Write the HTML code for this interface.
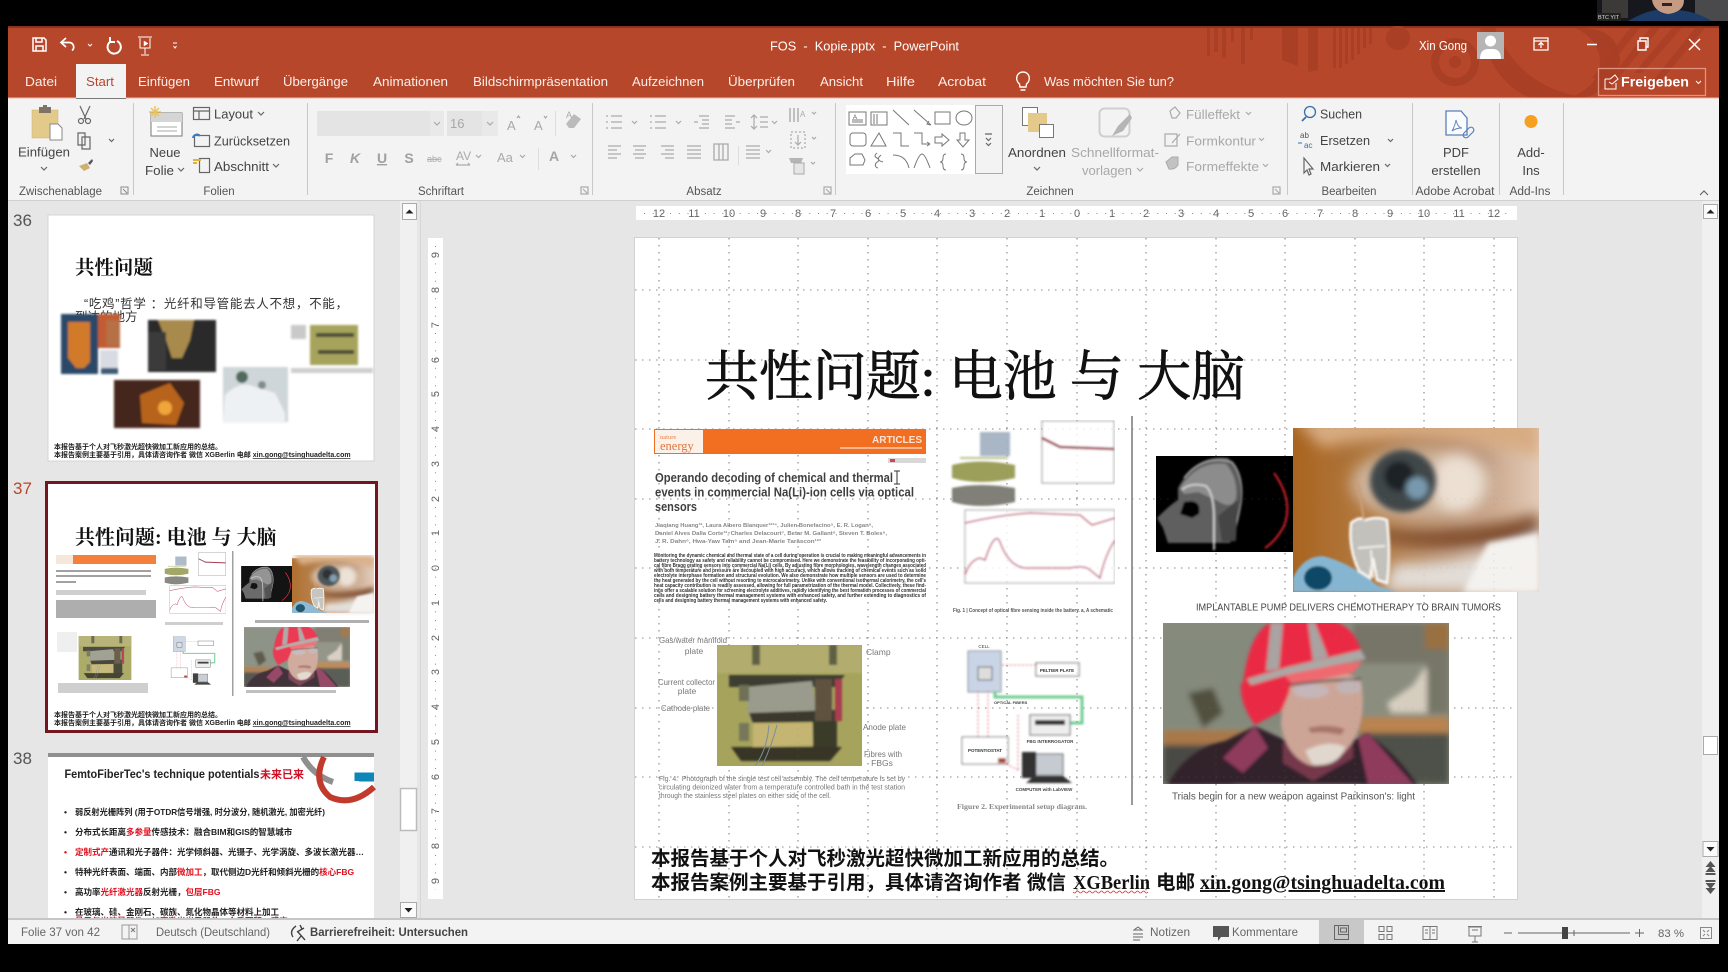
<!DOCTYPE html>
<html lang="de"><head><meta charset="utf-8"><title>FOS - Kopie.pptx - PowerPoint</title>
<style>
html,body{margin:0;padding:0;background:#000;width:1728px;height:972px;overflow:hidden}
svg{display:block;filter:blur(.35px)}
text{font-family:"Liberation Sans","Noto Sans CJK SC",sans-serif;white-space:pre}
.w{fill:#fff;font-size:13px}
.tab{fill:#fbeee9;font-size:13px}
.r{fill:#444;font-size:13px}
.d{fill:#a8a8a8;font-size:13px}
.l{fill:#555;font-size:11.5px;text-anchor:middle}
.m{text-anchor:middle}
.s{fill:#666;font-size:12px}
.rn{fill:#666;font-size:11px;text-anchor:middle}
.ser{font-family:"Liberation Serif","Noto Serif CJK SC",serif}
.ic{fill:none;stroke:#666;stroke-width:1.2}
.dc{fill:none;stroke:#aaa;stroke-width:1.2}
.sh{fill:none;stroke:#777;stroke-width:1}
</style></head><body>
<svg xmlns="http://www.w3.org/2000/svg" width="1728" height="972" viewBox="0 0 1728 972">
<defs>
<filter id="b1" x="-20%" y="-20%" width="140%" height="140%"><feGaussianBlur stdDeviation="1"/></filter>
<filter id="b2" x="-20%" y="-20%" width="140%" height="140%"><feGaussianBlur stdDeviation="1.6"/></filter>
<filter id="b3" x="-30%" y="-30%" width="160%" height="160%"><feGaussianBlur stdDeviation="3"/></filter>
<filter id="b7" x="-40%" y="-40%" width="180%" height="180%"><feGaussianBlur stdDeviation="7"/></filter>
<linearGradient id="eyeg" x1="0" x2="1" y1="0" y2="0"><stop offset="0" stop-color="#a9641f"/><stop offset=".3" stop-color="#b27a42"/><stop offset=".65" stop-color="#b98d6c"/><stop offset="1" stop-color="#e3cbb8"/></linearGradient>

<symbol id="eye" viewBox="0 0 246 164" overflow="hidden">
<rect width="246" height="164" fill="url(#eyeg)"/>
<g filter="url(#b7)">
<path d="M30 20C70 5 190 5 246 30L246 -10L0 -10Z" fill="#d8ac82"/>
<path d="M40 35Q120 -5 210 40L190 28Q120 8 50 28Z" fill="#70502f"/>
<ellipse cx="130" cy="56" rx="72" ry="36" fill="#cdb29a"/>
<ellipse cx="165" cy="55" rx="26" ry="30" fill="#ece0d3"/>
<path d="M70 100Q150 112 246 85L246 112Q150 126 90 112Z" fill="#7e4c2c"/>
<path d="M100 135Q190 135 246 105L246 164L90 164Z" fill="#e2ddd7"/>
</g>
<g filter="url(#b3)">
<ellipse cx="110" cy="53" rx="33" ry="31" fill="#3f474a"/>
<circle cx="106" cy="48" r="15" fill="#1f2427"/>
<ellipse cx="124" cy="60" rx="11" ry="11" fill="#7899ad"/>
<path d="M195 115L246 105L246 164L170 164Z" fill="#f4f2ef"/>
</g>
<g filter="url(#b1)">
<path d="M0 150Q10 128 30 128Q58 135 85 158L105 164L0 164Z" fill="#86b5d2"/>
<ellipse cx="25" cy="150" rx="14" ry="12" fill="#0f4a66"/>
<path d="M58 95Q66 88 72 92Q84 88 94 92Q98 125 94 155L84 152L80 130L77 150L66 143Q55 120 58 95Z" fill="#c2c1bb" stroke="#fbf8f3" stroke-width="2.500"/>
<path d="M65 120L92 118M78 122L80 150" stroke="#f1efeb" stroke-width="2"/>
<path d="M65 55L71 92" stroke="#c99d74" stroke-width="2.500"/>
</g>
</symbol>

<symbol id="person" viewBox="0 0 286 161" overflow="hidden">
<rect width="286" height="161" fill="#8b8e7f"/>
<g filter="url(#b3)">
<rect x="0" y="0" width="120" height="105" fill="#848a7c"/>
<rect x="190" y="0" width="96" height="40" fill="#777568"/>
<rect x="262" y="0" width="24" height="26" fill="#99703f"/>
<rect x="0" y="107" width="90" height="15" fill="#a8784a"/>
<rect x="195" y="94" width="91" height="16" fill="#ba8350"/>
<rect x="197" y="110" width="89" height="51" fill="#4e5148"/>
<rect x="0" y="122" width="70" height="39" fill="#4a4a44"/>
<path d="M224 80L250 62L262 44L280 76L270 90L228 90Z" fill="#d6cdbf"/>
<path d="M25 70L50 65L60 90L40 105Z" fill="#51503e"/>
<rect x="264" y="30" width="22" height="60" fill="#777768"/>
</g>
<g filter="url(#b2)">
<path d="M5 161Q25 125 62 118L92 103L150 130L205 112Q228 125 254 161Z" fill="#33202c"/>
<path d="M60 135L92 103L105 125L80 150ZM195 115L205 110L250 161L205 161Z" fill="#8e3a5c"/>
<path d="M120 118Q150 145 190 115L190 135L150 158L120 140Z" fill="#75394c"/>
<path d="M122 55Q170 38 198 58Q204 95 190 118Q172 146 146 142Q122 132 118 100Z" fill="#cda596"/>
<path d="M142 128Q165 116 182 124Q176 144 150 142Z" fill="#e0d8ce"/>
<path d="M145 105Q165 100 182 106L178 112Q160 108 148 110Z" fill="#a87468"/>
<path d="M80 60Q88 -5 120 -2L170 -2Q195 5 200 36L135 52Q127 60 126 70Q118 90 118 88L92 102Q76 80 78 60Z" fill="#ea2a45"/>
<path d="M120 50L200 38L190 50L130 62Z" fill="#ee6a70"/>
<path d="M84 56L125 44L198 27L203 36L130 50L88 62Z" fill="#aaa9a6"/>
<path d="M108 0L103 48L116 46L120 0ZM145 0L150 38L165 34L152 0Z" fill="#a9a3a2"/>
<path d="M126 62L160 58L198 56" stroke="#4a4a4a" stroke-width="2" fill="none"/>
<ellipse cx="148" cy="68" rx="18" ry="7" fill="#c3b9bf" opacity=".85"/>
<ellipse cx="186" cy="64" rx="13" ry="7" fill="#bfb5ba" opacity=".85"/>
</g>
</symbol>

<symbol id="mri" viewBox="0 0 138 96" overflow="hidden">
<rect width="138" height="96" fill="#000"/>
<g filter="url(#b1)">
<path d="M1 62Q15 48 22 44L22 32Q40 -2 72 2Q86 15 84 40Q82 65 74 87L12 87L7 72Z" fill="#5e5e5e"/>
<path d="M24 32Q42 4 70 8Q82 22 80 42Q76 55 60 44L42 36L28 38Z" fill="#8c8c8c"/>
<path d="M28 22Q46 -2 76 6Q88 20 85 46Q82 65 76 85" stroke="#a8a8a8" stroke-width="1.500" fill="none"/>
<path d="M26 34Q34 26 50 30Q58 38 58 62L58 94" stroke="#cdcdcd" stroke-width="2" fill="none"/>
<path d="M28 46Q46 42 43 58L36 62L24 58Z" fill="#000"/>
<path d="M62 60L82 44L80 85L66 86Z" fill="#444"/>
<path d="M118 17Q138 45 128 70Q120 85 109 92" stroke="#d6202a" stroke-width="2" fill="none"/>
</g>
</symbol>

<symbol id="clamp" viewBox="0 0 145 121" overflow="hidden">
<rect width="145" height="121" fill="#a6a45c"/>
<g filter="url(#b1)">
<rect x="0" y="0" width="145" height="28" fill="#b2ad6e"/>
<rect x="35" y="0" width="8" height="20" fill="#5f5e45"/>
<rect x="112" y="0" width="8" height="20" fill="#5f5e45"/>
<path d="M12 30L128 30L118 42L12 42Z" fill="#3e3c33"/>
<path d="M28 42L95 36L100 70L32 72Z" fill="#9a9b8c"/>
<path d="M32 68L118 65L125 76L36 78Z" fill="#3b392d"/>
<rect x="98" y="34" width="17" height="50" fill="#5e5340"/>
<rect x="118" y="34" width="7" height="42" fill="#a83e50"/>
<path d="M36 78L95 78L96 100L36 102Z" fill="#c4b572"/>
<rect x="96" y="76" width="24" height="30" fill="#3b3a2a"/>
<path d="M14 102L125 102L113 116L24 116Z" fill="#373428"/>
<rect x="22" y="40" width="10" height="16" fill="#6f6f55"/>
<rect x="22" y="78" width="10" height="18" fill="#77775a"/>
</g>
<path d="M52 80Q50 105 38 121M60 80Q55 100 45 121" stroke="#7a8ea0" stroke-width="1" fill="none"/>
</symbol>

<symbol id="figa" viewBox="0 0 165 165" overflow="hidden">
<g filter="url(#b1)">
<rect x="30" y="12" width="30" height="24" fill="#a8b6c6"/>
<path d="M10 38L58 38" stroke="#b9c38a" stroke-width="2"/>
<path d="M2 45Q30 38 65 45L65 58Q30 66 2 58Z" fill="#9b9f5a"/>
<path d="M2 68Q30 62 65 68L65 82Q30 90 2 82Z" fill="#808078"/>
<rect x="92" y="1" width="72" height="62" fill="#fff" stroke="#888" stroke-width="1"/>
<path d="M92 18L100 22L110 27L164 29" stroke="#9a2f40" stroke-width="2.500" fill="none"/>
<rect x="15" y="90" width="150" height="73" fill="#fff" stroke="#999" stroke-width="1"/>
<path d="M15 103Q50 95 80 93L130 95L142 105L165 98M15 155Q20 140 30 138L35 140Q45 110 50 122Q60 150 80 148L120 148Q135 145 140 150L150 158Q155 135 165 120" stroke="#c25a78" stroke-width="1.500" fill="none"/>
</g>
</symbol>

<symbol id="figb" viewBox="0 0 130 165" overflow="hidden">
<g filter="url(#b1)" stroke-linejoin="miter">
<rect x="8" y="10" width="33" height="41" fill="#c9d5e6" stroke="#8a8f98"/>
<rect x="18" y="26" width="14" height="13" fill="#ddd" stroke="#444"/>
<path d="M35 50L35 56L122 56L122 82L110 82" stroke="#6fcd92" stroke-width="3" fill="none"/>
<path d="M18 50L18 96M28 50L28 96M42 24L76 24" stroke="#e06a78" stroke-width="1" stroke-dasharray="2 2" fill="none"/>
<rect x="76" y="22" width="43" height="13" fill="#fff" stroke="#444"/>
<rect x="70" y="74" width="40" height="20" fill="#eee" stroke="#444"/>
<rect x="75" y="79" width="30" height="5" fill="#333"/>
<rect x="2" y="96" width="46" height="27" fill="#fff" stroke="#666"/>
<rect x="38" y="117" width="8" height="5" fill="#a43"/>
<path d="M46 123L60 130M58 74L58 130" stroke="#e06a78" stroke-width="1" stroke-dasharray="2 2" fill="none"/>
<rect x="62" y="111" width="14" height="26" fill="#333"/>
<rect x="76" y="113" width="27" height="21" fill="#c6cbd2" stroke="#555"/>
<path d="M66 142L112 142L103 135L74 135Z" fill="#333"/>
</g>
</symbol>

<g id="grid" fill="none" stroke="#888" stroke-width="1.100" stroke-dasharray="1.500 5.500">
<path d="M659 238V899M729 238V899M798 238V899M868 238V899M937 238V899M1007 238V899M1077 238V899M1146 238V899M1216 238V899M1285 238V899M1355 238V899M1424 238V899M1494 238V899"/>
<path d="M635 290H1517M635 360H1517M635 429H1517M635 499H1517M635 568H1517M635 638H1517M635 708H1517M635 777H1517M635 847H1517"/>
</g>
</defs>

<rect width="1728" height="972" fill="#000"/>

<!-- webcam -->
<g>
<rect x="1597" y="0" width="131" height="21" fill="#16181d"/>
<path d="M1602 0h26v18h-26z" fill="#3b3a38"/>
<path d="M1695 0h33v21h-33z" fill="#4a4a4c"/>
<path d="M1628 21Q1650 8 1665 10Q1690 8 1712 21Z" fill="#1c3b66"/>
<path d="M1652 0H1684Q1684 12 1668 14Q1654 12 1652 0Z" fill="#c59b84"/>
<rect x="1662" y="3" width="10" height="3" fill="#33221d"/>
<rect x="1597" y="13" width="24" height="8" fill="#222"/>
<text x="1598" y="19" font-size="5.500" fill="#ddd">BTC YIT</text>
</g>

<!-- title bar -->
<rect x="8" y="26" width="1711" height="72" fill="#b7472a"/>
<rect x="8" y="26" width="1711" height="2" fill="#8a3520"/>
<g fill="#a93f25">
<path d="M1207 28h3v28h-3zM1214 28h4v24h-4zM1222 28h4v30h-4zM1231 28h3v14h-3zM1241 28h4v36h-4zM1250 28h3v12h-3z"/>
<path d="M1282 28h16v38l-16-6zM1308 28h10v42l-10 2zM1333 28h3v40h-3zM1339 28h3v40h-3zM1345 28h3v36h-3zM1351 28h3v32h-3zM1357 28h3v26h-3zM1363 28h3v20h-3zM1369 28h3v16h-3z"/>
<circle cx="1398" cy="38" r="12"/>
<circle cx="1455" cy="62" r="20" fill="none" stroke="#a93f25" stroke-width="8"/>
<circle cx="1455" cy="62" r="6"/>
<path d="M1495 28Q1520 90 1590 98H1530Q1490 80 1480 28Z"/>
<path d="M1580 28Q1620 28 1620 62Q1610 90 1585 98H1570Q1600 85 1600 62Q1600 40 1575 28Z"/>
<path d="M1630 28h10l-40 50h-8zM1650 28h10l-50 60h-8zM1672 28h10l-40 45h-8zM1695 28h10l-50 60h-8z" opacity=".8"/>
</g>

<!-- QAT icons -->
<g fill="none" stroke="#fff" stroke-width="1.500">
<path d="M33 38h11l2 2v11H33zM36 51v-5h7v5M36 38v4h6v-4"/>
<path d="M66 38l-5 4.500 5 4.500M62 42.500h7a4.500 4.500 0 0 1 3 8" stroke-width="1.700"/>
<path d="M88 44l2 2 2-2" stroke-width="1"/>
<path d="M117 41a6.600 6.600 0 1 1-6 .2M110 37v5h5" stroke-width="2"/>
<path d="M138 37h14M140 38v10h10v-10M145 48v6M141 55h8" stroke-width="1"/>
<path d="M144 41l4 2.500-4 2.500z" fill="#fff" stroke-width=".5"/>
<path d="M173 43h4M173.500 46l1.500 2 1.500-2" stroke-width="1"/>
</g>

<text x="770" y="50.500" class="w" textLength="189" lengthAdjust="spacingAndGlyphs">FOS  -  Kopie.pptx  -  PowerPoint</text>

<!-- tabs -->
<rect x="76" y="64" width="50" height="34" fill="#f3f3f3"/>
<rect x="8" y="97.500" width="68" height="1" fill="#f0b9a8"/><rect x="126" y="97.500" width="1593" height="1" fill="#f0b9a8"/>
<text x="25" y="86" class="tab" textLength="32" lengthAdjust="spacingAndGlyphs">Datei</text>
<text x="86" y="86" textLength="28" lengthAdjust="spacingAndGlyphs" font-size="13" fill="#b7472a">Start</text>
<text x="138" y="86" class="tab" textLength="52" lengthAdjust="spacingAndGlyphs">Einfügen</text>
<text x="214" y="86" class="tab" textLength="45" lengthAdjust="spacingAndGlyphs">Entwurf</text>
<text x="283" y="86" class="tab" textLength="65" lengthAdjust="spacingAndGlyphs">Übergänge</text>
<text x="373" y="86" class="tab" textLength="75" lengthAdjust="spacingAndGlyphs">Animationen</text>
<text x="473" y="86" class="tab" textLength="135" lengthAdjust="spacingAndGlyphs">Bildschirmpräsentation</text>
<text x="632" y="86" class="tab" textLength="72" lengthAdjust="spacingAndGlyphs">Aufzeichnen</text>
<text x="728" y="86" class="tab" textLength="67" lengthAdjust="spacingAndGlyphs">Überprüfen</text>
<text x="820" y="86" class="tab" textLength="43" lengthAdjust="spacingAndGlyphs">Ansicht</text>
<text x="886" y="86" class="tab" textLength="29" lengthAdjust="spacingAndGlyphs">Hilfe</text>
<text x="938" y="86" class="tab" textLength="48" lengthAdjust="spacingAndGlyphs">Acrobat</text>
<g fill="none" stroke="#fff" stroke-width="1.400"><path d="M1019.500 84c-5-4-3-12 3.500-12s8.500 8 3.500 12l-.5 3h-6zM1020.500 90h5"/></g>
<text x="1044" y="86" class="tab" textLength="130" lengthAdjust="spacingAndGlyphs">Was möchten Sie tun?</text>

<!-- account and window controls -->
<text x="1419" y="50" class="w" font-size="12" textLength="48" lengthAdjust="spacingAndGlyphs">Xin Gong</text>
<rect x="1477" y="32" width="27" height="27" fill="#b5b5b5"/>
<circle cx="1490.500" cy="41" r="5.500" fill="#fff"/><path d="M1480 59q0-9 7-10h7q7 1 7 10z" fill="#fff"/>
<g fill="none" stroke="#fff" stroke-width="1.300">
<path d="M1534 38h14v12h-14zM1534 41h14M1541 48v-5M1538.500 45l2.500-2.500 2.500 2.500"/>
<path d="M1587 44.500h10" stroke-width="1.500"/>
<path d="M1638 41h8v9h-8zM1640 41v-3h8v9h-2" stroke-width="1.400"/>
<path d="M1689 39l11 11M1700 39l-11 11" stroke-width="1.500"/>
</g>
<rect x="1598.500" y="68.500" width="107" height="27" fill="none" stroke="#e0937f" stroke-width="1.300"/>
<path d="M1605 79v10h11v-6M1605 79h5l5-4 3 4-6 5-3-2" fill="none" stroke="#fff" stroke-width="1"/>
<text x="1621" y="86.500" font-size="14" font-weight="700" fill="#fff" textLength="68" lengthAdjust="spacingAndGlyphs">Freigeben</text>
<path d="M1696 81l2.500 2.500 2.500-2.500" fill="none" stroke="#fff"/>

<!-- ribbon -->
<rect x="8" y="98.500" width="1711" height="102" fill="#f3f3f3"/>
<rect x="8" y="200" width="1711" height="1" fill="#cfcfcf"/>
<g stroke="#c8c8c8" stroke-width="1"><path d="M133.500 103V195M307.500 103V195M592.500 103V195M835.500 103V195M1287.500 103V195M1412.500 103V195M1499.500 103V195M1563.500 103V195"/></g>

<!-- clipboard group -->
<rect x="32" y="110" width="26" height="28" fill="#e3c98a" stroke="#cdb26f" stroke-width=".5"/>
<rect x="39" y="107" width="12" height="6" fill="#7d7368"/><rect x="43" y="105" width="4" height="3" fill="#7d7368"/>
<path d="M50 124h8l4 4v12H50z" fill="#fff" stroke="#888"/>
<text x="44" y="156.500" class="r m" textLength="52" lengthAdjust="spacingAndGlyphs">Einfügen</text>
<path d="M41 167l3 3 3-3" class="ic"/>
<path d="M80 106l6 13M90 106l-6 13" class="ic"/><circle cx="81" cy="121" r="2.500" class="ic"/><circle cx="88" cy="121" r="2.500" class="ic"/>
<path d="M78 133h7v12h-7zM82 137h8v12h-8z" class="ic" fill="#f3f3f3"/>
<path d="M109 139l2.500 2.500 2.500-2.500" class="ic"/>
<path d="M79 166l8-3 3 5-6 3z" fill="#cdb26f"/><path d="M88 163l4-4 1 2-3 4z" fill="#555"/>
<text x="19" y="195" font-size="11.500" fill="#555" textLength="83" lengthAdjust="spacingAndGlyphs">Zwischenablage</text>
<path d="M121 187h7v7h-7zM123 189l4 4" fill="none" stroke="#888"/>

<!-- slides group -->
<rect x="151" y="113" width="31" height="23" fill="#fff" stroke="#777"/><rect x="151" y="113" width="31" height="9" fill="#d5d5d5"/>
<path d="M157 127h20M157 131h20" stroke="#aaa"/>
<g stroke="#e9c45a" stroke-width="1.500"><path d="M155 106v12M149 112h12M151 108l8 8M159 108l-8 8"/></g>
<text x="165" y="157" class="r m" textLength="31" lengthAdjust="spacingAndGlyphs">Neue</text>
<text x="145" y="175" class="r" textLength="29" lengthAdjust="spacingAndGlyphs">Folie</text><path d="M178 168l3 3 3-3" class="ic"/>
<rect x="193.500" y="107.500" width="16" height="12" class="ic" fill="#fff"/><path d="M194 111h15M199 111v8" class="ic"/>
<text x="214" y="118.500" class="r" textLength="39" lengthAdjust="spacingAndGlyphs">Layout</text><path d="M258 112l3 3 3-3" class="ic"/>
<rect x="194.500" y="135.500" width="15" height="11" class="ic" fill="#fff"/><path d="M193 138a4 4 0 0 1 7-2" stroke="#3a7cc1" stroke-width="2" fill="none"/>
<text x="214" y="145.500" class="r" textLength="76" lengthAdjust="spacingAndGlyphs">Zurücksetzen</text>
<rect x="199.500" y="158.500" width="10" height="14" class="ic" fill="#fff"/><path d="M193 160h8M193 163h4" stroke="#e0b040" stroke-width="2"/>
<text x="214" y="171" class="r" textLength="55" lengthAdjust="spacingAndGlyphs">Abschnitt</text><path d="M273 164l3 3 3-3" class="ic"/>
<text x="219" y="195" class="l">Folien</text>

<!-- font group -->
<rect x="317" y="111" width="113" height="25" fill="#e4e4e4"/><rect x="430" y="111" width="14" height="25" fill="#e9e9e9"/>
<rect x="447" y="111" width="35" height="25" fill="#e4e4e4"/><rect x="482" y="111" width="16" height="25" fill="#e9e9e9"/>
<path d="M434 122l3 3 3-3M487 122l3 3 3-3" class="dc"/>
<text x="450" y="128" class="d" font-size="14">16</text>
<text x="507" y="130" class="d" font-size="14">A</text><text x="534" y="130" class="d" font-size="14">A</text>
<path d="M517 118l1.500-2 1.500 2M544 116l1.500 2 1.500-2" class="dc"/>
<path d="M555.500 111V136" stroke="#ddd"/>
<path d="M566 124l8-10 7 5-7 9h-5z" fill="#bbb"/><text x="566" y="118" font-size="9" fill="#aaa">A</text>
<g font-size="14" font-weight="700" fill="#a0a0a0" text-anchor="middle">
<text x="329" y="163">F</text><text x="355" y="163" font-style="italic">K</text><text x="382" y="163" text-decoration="underline">U</text><text x="409" y="163">S</text>
</g>
<text x="427" y="162" font-size="9" fill="#aaa" text-decoration="line-through">abc</text>
<text x="456" y="160" font-size="12" fill="#aaa">AV</text><path d="M456 165h14M456 165l2-2M470 165l-2-2" class="dc"/><path d="M476 155l2.500 2.500 2.500-2.500" class="dc"/>
<text x="497" y="162" font-size="13" fill="#aaa">Aa</text><path d="M520 155l2.500 2.500 2.500-2.500" class="dc"/>
<path d="M538.500 148V170" stroke="#ddd"/>
<text x="549" y="161" font-size="14" font-weight="700" fill="#a5a5a5">A</text><path d="M571 155l2.500 2.500 2.500-2.500" class="dc"/>
<text x="441" y="195" class="l">Schriftart</text>
<path d="M581 187h7v7h-7zM583 189l4 4" class="dc"/>

<!-- paragraph group -->
<g class="dc">
<path d="M611 116h11M611 122h11M611 128h11M606 116h2M606 122h2M606 128h2"/><path d="M632 121l2.500 2.500 2.500-2.500"/>
<path d="M655 116h11M655 122h11M655 128h11M650 116h2M650 122h2M650 128h2"/><path d="M676 121l2.500 2.500 2.500-2.500"/>
<path d="M699 116h10M702 120h7M702 124h7M699 128h10M698 122h-4"/>
<path d="M725 116h10M725 120h7M725 124h7M725 128h10M736 122h4"/>
<path d="M754 115v14M751 118l3-3 3 3M751 126l3 3 3-3M760 117h8M760 122h8M760 127h8"/><path d="M772 121l2.500 2.500 2.500-2.500"/>
<path d="M790 108v14M794 108v14M798 108v14" stroke-width="1.400"/><path d="M812 112l2 2 2-2"/>
<path d="M791 132h14v16h-14z" stroke-dasharray="2 2"/><path d="M798 135v10M795 142l3 3 3-3"/><path d="M812 137l2 2 2-2"/>
<path d="M811 162l2 2 2-2"/>
<path d="M608 146h13M608 150h9M608 154h13M608 158h9"/>
<path d="M633 146h13M635 150h9M633 154h13M635 158h9"/>
<path d="M661 146h13M665 150h9M661 154h13M665 158h9"/>
<path d="M687 146h14M687 150h14M687 154h14M687 158h14"/>
<path d="M714 144h14v16h-14zM719 144v16M723 144v16" stroke-width="1.300"/>
<path d="M746 146h14M746 150h14M746 154h14M746 158h14"/><path d="M766 150l2.500 2.500 2.500-2.500"/>
</g>
<text x="800" y="117" font-size="8" fill="#aaa">A</text>
<path d="M738.500 146V165" stroke="#ddd"/>
<path d="M789 158h14l-2 5h-10z" fill="#b5b5b5"/><path d="M794 163h10v11h-10z" fill="#e6e6e6" stroke="#aaa"/>
<text x="704" y="195" class="l">Absatz</text>
<path d="M824 187h7v7h-7zM826 189l4 4" class="dc"/>

<!-- shapes gallery -->
<rect x="846" y="105" width="129" height="69" fill="#fff"/>
<rect x="975.500" y="105.500" width="27" height="68" fill="#f3f3f3" stroke="#aaa"/>
<path d="M985 134h7M986 138l2.500 2.500 2.500-2.500" class="ic"/><path d="M986 143l2.500 2.500 2.500-2.500" class="ic"/>
<g class="sh">
<rect x="849" y="112" width="17" height="13"/><path d="M852 120h11M852 122h11"/>
<rect x="871" y="112" width="16" height="13"/><path d="M874 114v10M877 114v10"/>
<path d="M893 110l16 15M914 110l17 15M931 125l-4-1 2-3"/>
<rect x="935" y="112" width="15" height="12"/><ellipse cx="964" cy="118" rx="8" ry="7"/>
<rect x="850" y="133" width="16" height="13" rx="3"/><path d="M871 146l8-13 7 13z"/><path d="M893 133h8v13h8M914 133h8v11h8M930 144l-3-2M930 144l-3 2"/>
<path d="M935 137h7v-3l7 6-7 6v-3h-7z"/><path d="M960 133h5v7h4l-6 7-6-7h3z"/>
<path d="M850 165v-7l5-4h7l3 6-2 5z"/><path d="M877 153q-4 3 0 5t-1 5q-2 4 2 5M881 155q-6 5 2 7"/>
<path d="M893 155q13 0 16 13"/><path d="M914 168q5-14 8-14t8 14"/>
<path d="M946 154q-3 0-3 4t-3 4q3 0 3 4t3 4M961 154q3 0 3 4t3 4q-3 0-3 4t-3 4"/>
</g>
<text x="853" y="119" font-size="6" fill="#555">A</text>

<!-- drawing -->
<rect x="1022.500" y="107.500" width="15" height="18" fill="#fff" stroke="#777"/>
<rect x="1028" y="113" width="19" height="19" fill="#e3c98a"/>
<rect x="1039.500" y="124.500" width="14" height="13" fill="#fff" stroke="#777"/>
<text x="1037" y="157" class="r m" textLength="58" lengthAdjust="spacingAndGlyphs">Anordnen</text>
<path d="M1034 167l3 3 3-3" class="ic"/>
<rect x="1099.500" y="108.500" width="30" height="28" rx="5" fill="none" stroke="#cfcfcf" stroke-width="2"/>
<path d="M1112 136l6-10 12-12 2 4-9 13z" fill="#b5b5b5"/>
<text x="1115" y="157" class="d m" textLength="88" lengthAdjust="spacingAndGlyphs">Schnellformat-</text>
<text x="1107" y="175" class="d m" textLength="50" lengthAdjust="spacingAndGlyphs">vorlagen</text><path d="M1137 168l3 3 3-3" class="dc"/>
<path d="M1170 111l5-4 5 6-4 5h-4z" class="dc"/>
<text x="1186" y="119" class="d" textLength="54" lengthAdjust="spacingAndGlyphs">Fülleffekt</text><path d="M1246 112l2.500 2.500 2.500-2.500" class="dc"/>
<path d="M1165 134h12v12h-12zM1172 143l8-9" class="dc"/>
<text x="1186" y="145.500" class="d" textLength="70" lengthAdjust="spacingAndGlyphs">Formkontur</text><path d="M1259 138l2.500 2.500 2.500-2.500" class="dc"/>
<path d="M1166 162l6-5h6v8q-3 5-9 4z" fill="#c2c2c2" stroke="#aaa"/>
<text x="1186" y="171" class="d" textLength="73" lengthAdjust="spacingAndGlyphs">Formeffekte</text><path d="M1263 164l2.500 2.500 2.500-2.500" class="dc"/>
<text x="1050" y="195" class="l">Zeichnen</text>
<path d="M1273 187h7v7h-7zM1275 189l4 4" class="dc"/>

<!-- edit -->
<circle cx="1310" cy="112" r="5.500" fill="none" stroke="#3a6ea8" stroke-width="1.300"/><path d="M1306 117l-4 4" stroke="#3a6ea8" stroke-width="1.800"/>
<text x="1320" y="118.500" class="r" textLength="42" lengthAdjust="spacingAndGlyphs">Suchen</text>
<text x="1300" y="138" font-size="8" fill="#555">ab</text><text x="1304" y="148" font-size="8" fill="#3a6ea8">ac</text><path d="M1298 143h4" stroke="#3a6ea8"/>
<text x="1320" y="145" class="r" textLength="50" lengthAdjust="spacingAndGlyphs">Ersetzen</text><path d="M1388 139l2.500 2.500 2.500-2.500" class="ic"/>
<path d="M1304 158v15l3-3 2 5 2-1-2-5h4z" class="ic"/>
<text x="1320" y="171" class="r" textLength="60" lengthAdjust="spacingAndGlyphs">Markieren</text><path d="M1385 164l2.500 2.500 2.500-2.500" class="ic"/>
<text x="1349" y="195" class="l" textLength="55" lengthAdjust="spacingAndGlyphs">Bearbeiten</text>

<path d="M1446 111h15l6 7v17h-21z" fill="#fafbff" stroke="#5a7fb8" stroke-width="1.300"/>
<path d="M1452 131q3-5 4-11 2 8 6 8-6 0-10 3" fill="none" stroke="#5a7fb8" stroke-width=".9"/>
<path d="M1464 133l5-5a2.500 2.500 0 0 1 4 4l-5 5a2.500 2.500 0 0 1-4-4z" fill="none" stroke="#5a7fb8" stroke-width="1.200"/>
<text x="1456" y="157" class="r m">PDF</text><text x="1456" y="175" class="r m">erstellen</text>
<text x="1455" y="195" class="l" font-size="11" textLength="79" lengthAdjust="spacingAndGlyphs">Adobe Acrobat</text>
<circle cx="1531" cy="121.500" r="6.500" fill="#f5a020"/>
<text x="1531" y="157" class="r m">Add-</text><text x="1531" y="175" class="r m">Ins</text>
<text x="1530" y="195" class="l" textLength="41" lengthAdjust="spacingAndGlyphs">Add-Ins</text>
<path d="M1700 195l4-4 4 4" class="ic"/>

<!-- main bg -->
<rect x="8" y="201" width="1711" height="719" fill="#e6e6e6"/>

<!-- thumb scrollbar -->
<rect x="400" y="201" width="17" height="719" fill="#f0f0f0"/>
<rect x="402.500" y="203.500" width="14" height="16" fill="#fbfbfb" stroke="#aaa"/>
<path d="M405.500 213.500h8l-4-4z" fill="#222"/>
<rect x="400.500" y="788.500" width="16" height="42" fill="#fff" stroke="#bbb" stroke-width="1.500"/>
<rect x="400.500" y="902.500" width="16" height="15" fill="#fbfbfb" stroke="#aaa"/>
<path d="M404.500 908h8l-4 4.500z" fill="#222"/>
<rect x="420" y="201" width="1" height="718" fill="#d7d7d7"/>

<!-- slide number labels -->
<text x="13" y="226" font-size="17" fill="#555">36</text>
<text x="13" y="494" font-size="17" fill="#b7472a">37</text>
<text x="13" y="764" font-size="17" fill="#555">38</text>

<!-- thumb 36 -->
<rect x="48" y="215" width="326" height="246" fill="#fff" stroke="#d4d4d4"/>
<text x="75" y="274" class="ser" font-size="19.500" font-weight="700" fill="#111">共性问题</text>
<text x="84" y="308" font-size="12.500" fill="#333" textLength="264">“吃鸡”哲学 ：光纤和导管能去人不想，不能，</text>
<text x="75" y="321" font-size="12.500" fill="#333">到达的地方</text>
<g filter="url(#b1)">
<rect x="61" y="314" width="37" height="60" fill="#2c4a68"/><path d="M68 322h22v40l-6 6h-8l-8-10z" fill="#d17a2c"/>
<rect x="98" y="314" width="22" height="34" fill="#c25b30"/><rect x="106" y="320" width="14" height="26" fill="#b66f44"/>
<rect x="100" y="350" width="18" height="18" fill="#d8dce2"/><rect x="101" y="368" width="17" height="6" fill="#3d5a78"/>
<rect x="148" y="320" width="68" height="52" fill="#2a2a2c"/><path d="M158 320h36l-4 20-8 18h-10l-6-18z" fill="#a88a4e"/><rect x="148" y="332" width="18" height="38" fill="#3a3a3a"/>
<rect x="114" y="380" width="86" height="48" fill="#45271b"/><path d="M140 395l30-12 14 20-8 22-34-2z" fill="#b7641f"/><circle cx="165" cy="408" r="7" fill="#f0a53a"/>
<rect x="223" y="367" width="65" height="55" fill="#cfd6d9"/><path d="M225 395q15-15 30-8l20 6 10 20v10H223z" fill="#eef1f3"/><circle cx="242" cy="377" r="6" fill="#516a5e"/><circle cx="262" cy="385" r="4" fill="#7f8c88"/>
<rect x="310" y="325" width="48" height="40" fill="#a6a45c"/><path d="M316 333h38v4h-38zM318 350h36v4h-36z" fill="#4b4a37"/>
<rect x="291" y="325" width="15" height="14" fill="#c9c9c9"/><rect x="291" y="368" width="82" height="5" fill="#cfcfcf"/>
</g>
<text x="54" y="449" font-size="7" font-weight="700" fill="#222">本报告基于个人对飞秒激光超快微加工新应用的总结。</text>
<text x="54" y="457" font-size="7" font-weight="700" fill="#222">本报告案例主要基于引用，具体请咨询作者 微信 XGBerlin 电邮 <tspan text-decoration="underline">xin.gong@tsinghuadelta.com</tspan></text>

<!-- thumb 37 -->
<rect x="46.500" y="482.500" width="330" height="249" fill="#fff" stroke="#74161f" stroke-width="3"/>
<text x="75" y="544" class="ser" font-size="20" font-weight="700" fill="#111">共性问题: 电池 与 大脑</text>
<g opacity=".92">
<rect x="56" y="555" width="100" height="9" fill="#f2772c"/><rect x="56" y="555" width="17" height="9" fill="#f6e6d8"/>
<rect x="56" y="570" width="95" height="2" fill="#9a9a9a"/><rect x="56" y="575" width="95" height="2" fill="#9a9a9a"/><rect x="56" y="581" width="20" height="2" fill="#9a9a9a"/>
<rect x="56" y="590" width="90" height="5" fill="#ccc"/>
<rect x="56" y="600" width="100" height="18" fill="#a8a8a8"/>
<rect x="57" y="632" width="20" height="20" fill="#eee"/>
<use href="#clamp" x="78" y="636" width="54" height="44"/>
<rect x="58" y="683" width="90" height="10" fill="#ccc"/>
<use href="#figa" x="164" y="552" width="62" height="62"/>
<rect x="165" y="622" width="58" height="3" fill="#ccc"/>
<use href="#figb" x="170" y="633" width="48" height="60"/>
<rect x="232" y="551" width="1.500" height="145" fill="#999"/>
<use href="#mri" x="241" y="566" width="52" height="36"/>
<use href="#eye" x="292" y="555" width="82" height="61"/>
<rect x="255" y="620" width="114" height="3" fill="#aaa"/>
<use href="#person" x="244" y="627" width="106" height="60"/>
<rect x="246" y="690" width="90" height="3" fill="#bbb"/>
</g>
<text x="54" y="717" font-size="7" font-weight="700" fill="#222">本报告基于个人对飞秒激光超快微加工新应用的总结。</text>
<text x="54" y="725" font-size="7" font-weight="700" fill="#222">本报告案例主要基于引用，具体请咨询作者 微信 XGBerlin 电邮 <tspan text-decoration="underline">xin.gong@tsinghuadelta.com</tspan></text>

<!-- thumb 38 -->
<rect x="48" y="753" width="326" height="170" fill="#fff"/>
<rect x="48" y="753" width="326" height="4" fill="#8f8f8f"/>
<g fill="none">
<path d="M303 757q10 18 30 25" stroke="#8f8f8f" stroke-width="6"/>
<path d="M324 757q-12 25 6 40 22 10 44-10" stroke="#c13a2c" stroke-width="6"/>
<path d="M359 781v-4h15" stroke="#0f86b8" stroke-width="9"/>
</g>
<text x="64.500" y="778" font-size="11.500" font-weight="700" fill="#222" textLength="195" lengthAdjust="spacingAndGlyphs">FemtoFiberTec's technique potentials</text>
<text x="260" y="778" font-size="11" font-weight="700" fill="#d10f23">未来已来</text>
<g font-size="8.500" font-weight="700" fill="#222">
<text x="64" y="815">•</text><text x="75" y="815" textLength="250" lengthAdjust="spacingAndGlyphs">弱反射光栅阵列 (用于OTDR信号增强, 时分波分, 随机激光, 加密光纤)</text>
<text x="64" y="835">•</text><text x="75" y="835">分布式长距离<tspan fill="#e0101f">多参量</tspan>传感技术：融合BIM和GIS的智慧城市</text>
<text x="64" y="855" fill="#d00">•</text><text x="75" y="855"><tspan fill="#e0101f">定制式产</tspan>通讯和光子器件：光学倾斜器、光镊子、光学涡旋、多波长激光器…</text>
<text x="64" y="875">•</text><text x="75" y="875">特种光纤表面、端面、内部<tspan fill="#e0101f">微加工</tspan>，取代侧边D光纤和倾斜光栅的<tspan fill="#e0101f">核心FBG</tspan></text>
<text x="64" y="895">•</text><text x="75" y="895">高功率<tspan fill="#e0101f">光纤激光器</tspan>反射光栅，<tspan fill="#e0101f">包层FBG</tspan></text>
<text x="64" y="915">•</text><text x="75" y="915">在玻璃、硅、金刚石、碳族、氮化物晶体等材料上加工</text>
<text x="75" y="924" fill="#e0101f">量子与光波导器件，加密激光光子器件，介质面积，感应</text>
</g>

<!-- rulers -->
<rect x="636" y="206" width="881" height="14" fill="#fff"/>
<rect x="428" y="238" width="15" height="661" fill="#fff"/>
<path d="M644 213.500H1510" stroke="#888" stroke-width="1" stroke-dasharray="1 7.700"/>
<path d="M435.500 246V890" stroke="#888" stroke-width="1" stroke-dasharray="1 7.700"/>
<g class="rn">
<text x="659" y="217">12</text><text x="694" y="217">11</text><text x="729" y="217">10</text><text x="763" y="217">9</text><text x="798" y="217">8</text><text x="833" y="217">7</text><text x="868" y="217">6</text><text x="903" y="217">5</text><text x="937" y="217">4</text><text x="972" y="217">3</text><text x="1007" y="217">2</text><text x="1042" y="217">1</text><text x="1077" y="217">0</text><text x="1112" y="217">1</text><text x="1146" y="217">2</text><text x="1181" y="217">3</text><text x="1216" y="217">4</text><text x="1251" y="217">5</text><text x="1285" y="217">6</text><text x="1320" y="217">7</text><text x="1355" y="217">8</text><text x="1390" y="217">9</text><text x="1424" y="217">10</text><text x="1459" y="217">11</text><text x="1494" y="217">12</text>
</g>
<g class="rn">
<text transform="translate(439 255) rotate(-90)">9</text><text transform="translate(439 290) rotate(-90)">8</text><text transform="translate(439 325) rotate(-90)">7</text><text transform="translate(439 360) rotate(-90)">6</text><text transform="translate(439 394) rotate(-90)">5</text><text transform="translate(439 429) rotate(-90)">4</text><text transform="translate(439 464) rotate(-90)">3</text><text transform="translate(439 499) rotate(-90)">2</text><text transform="translate(439 533) rotate(-90)">1</text><text transform="translate(439 568) rotate(-90)">0</text><text transform="translate(439 603) rotate(-90)">1</text><text transform="translate(439 638) rotate(-90)">2</text><text transform="translate(439 672) rotate(-90)">3</text><text transform="translate(439 707) rotate(-90)">4</text><text transform="translate(439 742) rotate(-90)">5</text><text transform="translate(439 777) rotate(-90)">6</text><text transform="translate(439 811) rotate(-90)">7</text><text transform="translate(439 846) rotate(-90)">8</text><text transform="translate(439 881) rotate(-90)">9</text>
</g>

<!-- main slide -->
<rect x="634" y="237" width="884" height="663" fill="#d2d2d2"/>
<rect x="635" y="238" width="882" height="661" fill="#fff"/>
<use href="#grid"/>

<text x="705" y="395" class="ser" font-size="54" font-weight="400" fill="#111" stroke="#111" stroke-width=".8" textLength="540">共性问题: 电池 与 大脑</text>

<!-- article -->
<rect x="654" y="429" width="272" height="25" fill="#f26f21"/>
<rect x="655" y="430" width="48" height="23" fill="#fbf1e8"/>
<text x="660" y="439" class="ser" font-size="6.500" fill="#e8824a">nature</text>
<text x="660" y="450" class="ser" font-size="12.500" fill="#e0763d">energy</text>
<text x="922" y="443" font-size="10" font-weight="700" fill="#fbe4d6" text-anchor="end">ARTICLES</text>
<rect x="840" y="447" width="82" height="2" fill="#f7b590"/>
<rect x="888" y="458" width="38" height="5" fill="#d8d8d8"/><rect x="890" y="459" width="5" height="3" fill="#c45"/>
<g font-size="13" font-weight="700" fill="#3f3f3f">
<text x="655" y="482" textLength="238" lengthAdjust="spacingAndGlyphs">Operando decoding of chemical and thermal</text>
<text x="655" y="496.500" textLength="259" lengthAdjust="spacingAndGlyphs">events in commercial Na(Li)-ion cells via optical</text>
<text x="655" y="511" textLength="42" lengthAdjust="spacingAndGlyphs">sensors</text>
</g>
<path d="M894 471h6M897 471v13M894 484h6" stroke="#333" fill="none"/>
<g font-size="5.500" font-weight="700" fill="#888">
<text x="655" y="527" textLength="218" lengthAdjust="spacingAndGlyphs">Jiaqiang Huang¹², Laura Albero Blanquer¹²³⁴, Julien Bonefacino⁵, E. R. Logan⁶,</text>
<text x="655" y="535" textLength="232" lengthAdjust="spacingAndGlyphs">Daniel Alves Dalla Corte¹², Charles Delacourt⁷, Betar M. Gallant⁸, Steven T. Boles⁹,</text>
<text x="655" y="543" textLength="166" lengthAdjust="spacingAndGlyphs">J. R. Dahn⁶, Hwa-Yaw Tam⁵ and Jean-Marie Tarascon¹²³</text>
</g>
<g font-size="5" font-weight="700" fill="#333">
<text x="654" y="557" textLength="272" lengthAdjust="spacingAndGlyphs">Monitoring the dynamic chemical and thermal state of a cell during operation is crucial to making meaningful advancements in</text>
<text x="654" y="562" textLength="272" lengthAdjust="spacingAndGlyphs">battery technology as safety and reliability cannot be compromised. Here we demonstrate the feasibility of incorporating opti-</text>
<text x="654" y="567" textLength="272" lengthAdjust="spacingAndGlyphs">cal fibre Bragg grating sensors into commercial Na(Li) cells. By adjusting fibre morphologies, wavelength changes associated</text>
<text x="654" y="572" textLength="272" lengthAdjust="spacingAndGlyphs">with both temperature and pressure are decoupled with high accuracy, which allows tracking of chemical events such as solid</text>
<text x="654" y="577" textLength="272" lengthAdjust="spacingAndGlyphs">electrolyte interphase formation and structural evolution. We also demonstrate how multiple sensors are used to determine</text>
<text x="654" y="582" textLength="272" lengthAdjust="spacingAndGlyphs">the heat generated by the cell without resorting to microcalorimetry. Unlike with conventional isothermal calorimetry, the cell's</text>
<text x="654" y="587" textLength="272" lengthAdjust="spacingAndGlyphs">heat capacity contribution is readily assessed, allowing for full parametrization of the thermal model. Collectively, these find-</text>
<text x="654" y="592" textLength="272" lengthAdjust="spacingAndGlyphs">ings offer a scalable solution for screening electrolyte additives, rapidly identifying the best formation processes of commercial</text>
<text x="654" y="597" textLength="272" lengthAdjust="spacingAndGlyphs">cells and designing battery thermal management systems with enhanced safety, and further extending to diagnostics of</text>
<text x="654" y="602" textLength="173" lengthAdjust="spacingAndGlyphs">cells and designing battery thermal management systems with enhanced safety.</text>
</g>

<!-- figures -->
<use href="#figa" x="950" y="420" width="165" height="165"/>
<text x="953" y="612" font-size="5" font-weight="700" fill="#555" textLength="160" lengthAdjust="spacingAndGlyphs">Fig. 1 | Concept of optical fibre sensing inside the battery. a, A schematic</text>

<use href="#clamp" x="717" y="645" width="145" height="121"/>
<g font-size="8.500" fill="#777">
<text x="659" y="643" textLength="68" lengthAdjust="spacingAndGlyphs">Gas/water manifold</text>
<text x="694" y="654" class="m">plate</text>
<text x="658" y="685" textLength="57" lengthAdjust="spacingAndGlyphs">Current collector</text>
<text x="687" y="694" class="m">plate</text>
<text x="661" y="711" textLength="49" lengthAdjust="spacingAndGlyphs">Cathode plate</text>
<text x="866" y="655">Clamp</text>
<text x="863" y="730" textLength="43" lengthAdjust="spacingAndGlyphs">Anode plate</text>
<text x="864" y="757" textLength="38" lengthAdjust="spacingAndGlyphs">Fibres with</text>
<text x="882" y="766" class="m">FBGs</text>
</g>
<g class="ser" font-size="7.500" fill="#777">
<text x="659" y="781" textLength="246" lengthAdjust="spacingAndGlyphs">Fig. 4.  Photograph of the single test cell assembly. The cell temperature is set by</text>
<text x="659" y="789.500" textLength="246" lengthAdjust="spacingAndGlyphs">circulating deionized water from a temperature controlled bath in the test station</text>
<text x="659" y="798" textLength="172" lengthAdjust="spacingAndGlyphs">through the stainless steel plates on either side of the cell.</text>
</g>

<use href="#figb" x="960" y="641" width="130" height="165" preserveAspectRatio="none"/>
<text x="984" y="648" font-size="4.500" fill="#444" class="m">CELL</text>
<text x="1057" y="672" font-size="4.500" font-weight="700" fill="#333" class="m">PELTIER PLATE</text>
<text x="994" y="704" font-size="4" font-weight="700" fill="#444">OPTICAL FIBERS</text>
<text x="1050" y="743" font-size="4.500" font-weight="700" fill="#444" class="m">FBG INTERROGATOR</text>
<text x="985" y="752" font-size="4.500" font-weight="700" fill="#333" class="m">POTENTIOSTAT</text>
<text x="1044" y="791" font-size="4.500" font-weight="700" fill="#444" class="m">COMPUTER with LabVIEW</text>
<text x="957" y="809" class="ser" font-size="7.500" font-weight="700" fill="#888" textLength="130" lengthAdjust="spacingAndGlyphs">Figure 2. Experimental setup diagram.</text>

<rect x="1131" y="416" width="2" height="389" fill="#999"/>

<use href="#mri" x="1156" y="456" width="138" height="96"/>
<use href="#eye" x="1293" y="428" width="246" height="164"/>
<text x="1196" y="610.500" font-size="10" fill="#444" textLength="305" lengthAdjust="spacingAndGlyphs">IMPLANTABLE PUMP DELIVERS CHEMOTHERAPY TO BRAIN TUMORS</text>
<use href="#person" x="1163" y="623" width="286" height="161"/>
<text x="1172" y="799.500" font-size="10" fill="#555" textLength="243" lengthAdjust="spacingAndGlyphs">Trials begin for a new weapon against Parkinson's: light</text>
<use href="#grid" opacity=".18"/>

<!-- slide footer -->
<g font-size="19.500" font-weight="700" fill="#111">
<text x="651" y="865">本报告基于个人对飞秒激光超快微加工新应用的总结。</text>
<text x="651" y="889">本报告案例主要基于引用，具体请咨询作者 微信</text>
<text x="1073" y="889" class="ser" textLength="77" lengthAdjust="spacingAndGlyphs">XGBerlin</text>
<text x="1156" y="889">电邮</text>
<text x="1200" y="889" class="ser" text-decoration="underline" textLength="245" lengthAdjust="spacingAndGlyphs">xin.gong@tsinghuadelta.com</text>
</g>
<path d="M1073 892q1.500 2 3 0t3 0 3 0 3 0 3 0 3 0 3 0 3 0 3 0 3 0 3 0 3 0 3 0 3 0 3 0 3 0 3 0 3 0 3 0 3 0 3 0 3 0 3 0 3 0 3 0" fill="none" stroke="#d33" stroke-width=".8"/>

<!-- main scrollbar -->
<rect x="1702" y="201" width="17" height="717" fill="#f0f0f0"/>
<rect x="1703.500" y="204.500" width="14" height="14" fill="#fbfbfb" stroke="#aaa"/>
<path d="M1706.500 213.500h8l-4-4z" fill="#222"/>
<rect x="1703.500" y="736.500" width="14" height="18" fill="#fff" stroke="#aaa"/>
<rect x="1703" y="841.500" width="15" height="15" fill="#fbfbfb" stroke="#aaa"/>
<path d="M1706.500 847h8l-4 4.500z" fill="#222"/>
<path d="M1710.500 861l5 6h-10zM1710.500 866l5 6h-10zM1705.500 873h10v2h-10z" fill="#555"/>
<path d="M1705.500 880h10v2h-10zM1705.500 883h10l-5 6zM1705.500 888h10l-5 6z" fill="#555"/>

<!-- status bar -->
<rect x="8" y="918" width="1711" height="2" fill="#c6c6c6"/>
<rect x="8" y="920" width="1711" height="24" fill="#f3f3f3"/>
<text x="21" y="936" class="s" textLength="79" lengthAdjust="spacingAndGlyphs">Folie 37 von 42</text>
<path d="M122 925h7v14h-7zM129 925h8v14h-8z" fill="none" stroke="#999"/><path d="M131 928l4 4M135 928l-4 4" stroke="#777"/>
<text x="156" y="936" class="s" textLength="114" lengthAdjust="spacingAndGlyphs">Deutsch (Deutschland)</text>
<path d="M296 926q-7 5-3 11M300 925l2 4M298 932l7 8M304 928l-7 4M297 941l4-5" fill="none" stroke="#444" stroke-width="1.400"/>
<text x="310" y="936" font-size="12" font-weight="700" fill="#444" textLength="158" lengthAdjust="spacingAndGlyphs">Barrierefreiheit: Untersuchen</text>
<path d="M1138 927l4 3h-8zM1133 934h10M1133 937h10M1133 940h7" fill="none" stroke="#666"/>
<text x="1150" y="936" class="s" textLength="40" lengthAdjust="spacingAndGlyphs">Notizen</text>
<path d="M1213 926h16v11h-8l-3 4v-4h-5z" fill="#555"/>
<text x="1232" y="936" class="s" textLength="66" lengthAdjust="spacingAndGlyphs">Kommentare</text>
<rect x="1319" y="920" width="45" height="24" fill="#c8c8c8"/>
<path d="M1334.500 925.500h14v14h-14zM1338.500 925.500v9h10M1340.500 928h6v4h-6z" fill="none" stroke="#666"/>
<path d="M1379 926.500h5v5h-5zM1387 926.500h5v5h-5zM1379 934.500h5v5h-5zM1387 934.500h5v5h-5z" fill="none" stroke="#777"/>
<path d="M1423 926.500h7v13h-7zM1430 926.500h7v13h-7zM1425 930h3M1425 933h3M1432 930h3M1432 933h3" fill="none" stroke="#777"/>
<path d="M1468 926.500h14M1469 927h12v9h-12zM1475 936v6M1472 942h6M1472 930h6" fill="none" stroke="#777"/>
<path d="M1504 933h8M1518 933h112M1574 930v6M1635 933h9M1639.500 929v8" stroke="#666" fill="none"/>
<rect x="1562" y="927" width="6" height="12" fill="#444"/>
<text x="1658" y="937" font-size="11" fill="#666" textLength="26" lengthAdjust="spacingAndGlyphs">83 %</text>
<rect x="1700.500" y="927.500" width="11" height="11" fill="none" stroke="#888"/><path d="M1703 930l2 2M1709 930l-2 2M1703 936l2-2M1709 936l-2-2" stroke="#888"/>
</svg>
</body></html>
